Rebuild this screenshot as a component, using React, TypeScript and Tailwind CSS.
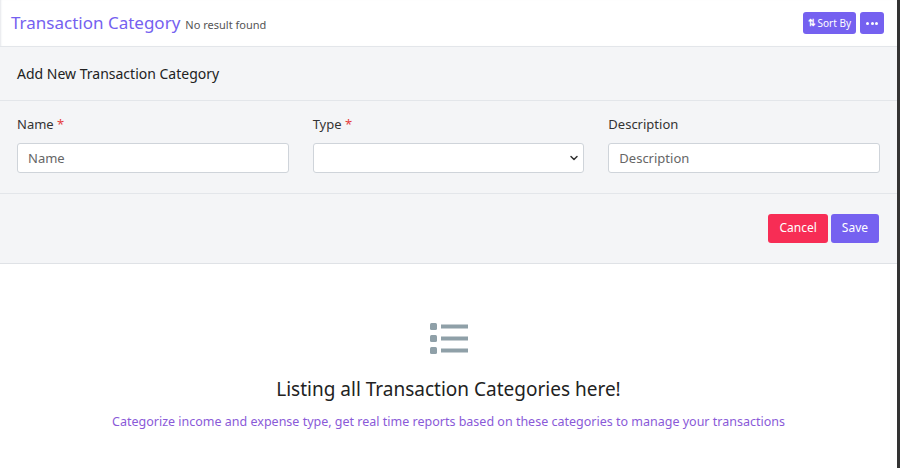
import { ChevronDown } from 'lucide-react';

export default function App() {
    return (
        <div className="flex h-[468px] w-[900px] bg-white font-['Liberation_Sans',Arial,sans-serif]">
            <div className="flex-1 flex flex-col">
                {/* Header */}
                <div className="h-[47px] flex items-center justify-between pl-[11px] pr-[13px] border-b border-[#e3e6ea] shadow-[inset_2px_0_2px_-1px_#e5e7eb]">
                    <div className="flex items-baseline gap-[5px]">
                        <span className="text-[17px] text-[#7561f0]">Transaction Category</span>
                        <span className="text-[11px] text-[#555]">No result found</span>
                    </div>
                    <div className="flex gap-[4px]">
                        <button className="h-[22px] px-[5px] rounded-[3px] bg-[#7561f0] text-white text-[10px] flex items-center gap-[2px]">
                            <span className="text-[9px] font-bold">⇅</span>Sort By
                        </button>
                        <button className="h-[22px] w-[24px] rounded-[3px] bg-[#7561f0] text-white flex items-center justify-center gap-[1.5px]">
                            <span className="w-[3px] h-[3px] rounded-full bg-white" />
                            <span className="w-[3px] h-[3px] rounded-full bg-white" />
                            <span className="w-[3px] h-[3px] rounded-full bg-white" />
                        </button>
                    </div>
                </div>

                {/* Form panel */}
                <div className="bg-[#f4f5f7] border-b border-[#dfe2e6]">
                    <div className="h-[54px] flex items-center px-[17px] border-b border-[#e3e6ea] text-[14px] text-[#222]">
                        Add New Transaction Category
                    </div>
                    <div className="grid grid-cols-3 gap-[24px] px-[17px] pt-[14px] pb-[20px] border-b border-[#e3e6ea]">
                        <div className="flex flex-col gap-[8px]">
                            <label className="text-[13px] text-[#333]">Name <span className="text-[#e53e3e]">*</span></label>
                            <input placeholder="Name" className="h-[30px] rounded-[3px] border border-[#cfd4da] bg-white px-[10px] text-[13px] placeholder:text-[#666] outline-none" />
                        </div>
                        <div className="flex flex-col gap-[8px]">
                            <label className="text-[13px] text-[#333]">Type <span className="text-[#e53e3e]">*</span></label>
                            <div className="h-[30px] rounded-[3px] border border-[#cfd4da] bg-white flex items-center justify-end pr-[3px]">
                                <ChevronDown size={12} strokeWidth={3} className="text-[#333]" />
                            </div>
                        </div>
                        <div className="flex flex-col gap-[8px]">
                            <label className="text-[13px] text-[#333]">Description</label>
                            <input placeholder="Description" className="h-[30px] rounded-[3px] border border-[#cfd4da] bg-white px-[10px] text-[13px] placeholder:text-[#666] outline-none" />
                        </div>
                    </div>
                    <div className="h-[69px] flex items-center justify-end gap-[3px] px-[18px]">
                        <button className="h-[29px] px-[11px] rounded-[3px] bg-[#f72d55] text-white text-[12px]">Cancel</button>
                        <button className="h-[29px] px-[11px] rounded-[3px] bg-[#7561f0] text-white text-[12px]">Save</button>
                    </div>
                </div>

                {/* Empty state */}
                <div className="flex flex-col items-center pt-[59px]">
                    <svg width="38" height="32" viewBox="0 0 38 32" fill="#8fa0a8">
                        <rect x="0" y="0" width="7" height="7" rx="1.5" />
                        <rect x="11" y="1.5" width="27" height="4" />
                        <rect x="0" y="12" width="7" height="7" rx="1.5" />
                        <rect x="11" y="13.5" width="27" height="4" />
                        <rect x="0" y="24" width="7" height="7" rx="1.5" />
                        <rect x="11" y="25.5" width="27" height="4" />
                    </svg>
                    <div className="mt-[20px] text-[19px] text-[#222]">Listing all Transaction Categories here!</div>
                    <div className="mt-[10px] text-[12.5px] text-[#8a5ad8]">
                        Categorize income and expense type, get real time reports based on these categories to manage your transactions
                    </div>
                </div>
            </div>
            <div className="w-[3px] bg-[#333]" />
        </div>
    );
}
